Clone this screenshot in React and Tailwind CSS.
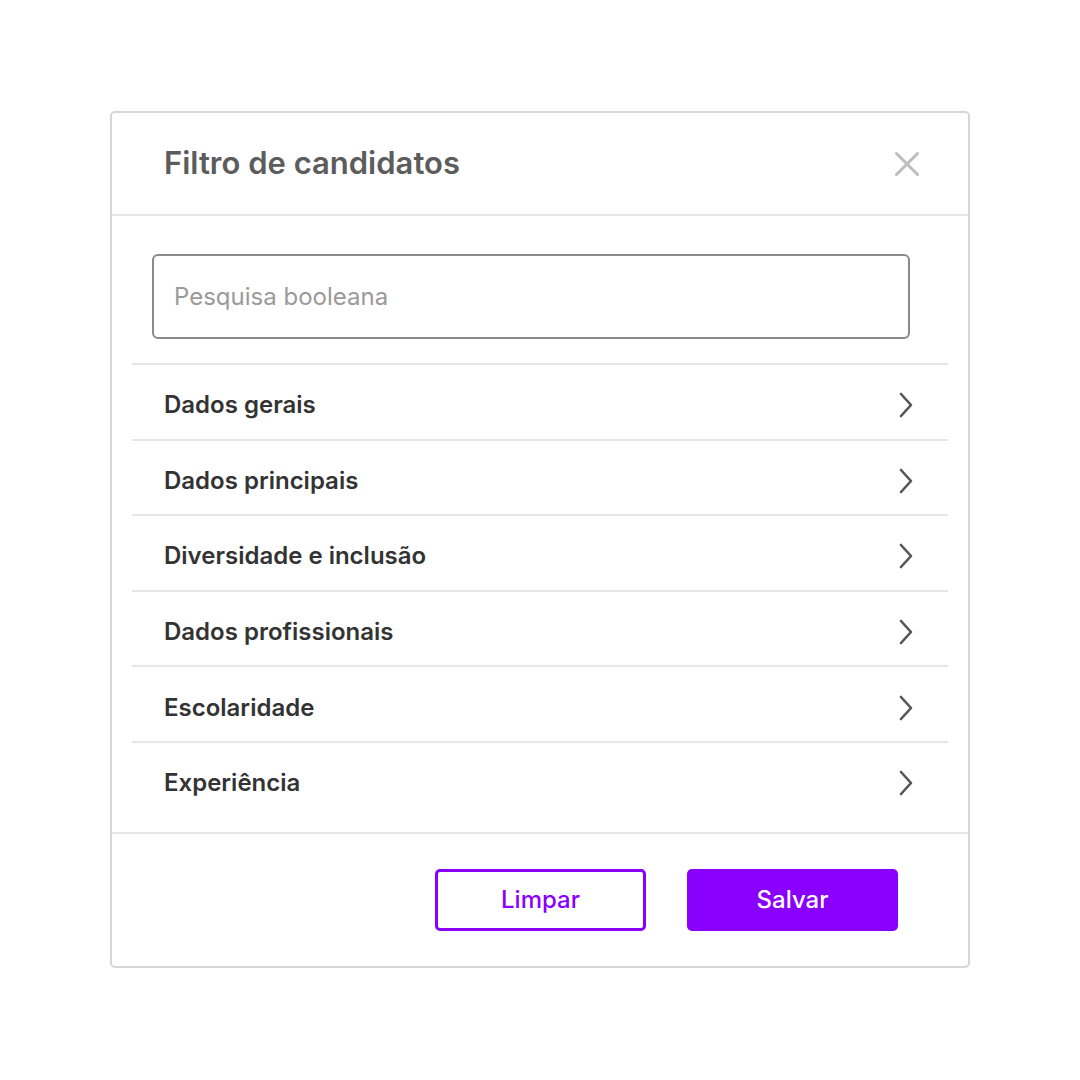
const sections = [
  "Dados gerais",
  "Dados principais",
  "Diversidade e inclusão",
  "Dados profissionais",
  "Escolaridade",
  "Experiência",
];

function Chevron() {
  return (
    <svg width="16" height="26" viewBox="0 0 16 26" fill="none" className="shrink-0">
      <path d="M3 2l10 11-10 11" stroke="#555555" strokeWidth="2.6" strokeLinecap="round" strokeLinejoin="round" />
    </svg>
  );
}

function CloseIcon() {
  return (
    <svg width="26" height="26" viewBox="0 0 26 26" fill="none">
      <path d="M2.5 2.5l21 21M23.5 2.5l-21 21" stroke="#bdbdbd" strokeWidth="3" strokeLinecap="round" />
    </svg>
  );
}

export default function App() {
  return (
    <div className="min-h-[1080px] bg-white pt-[111px]" style={{ fontFamily: "Inter, 'Noto Sans', sans-serif" }}>
      <div className="mx-auto w-[860px] rounded-[5px] border-2 border-[#d6d6d6] bg-white">
        {/* Header */}
        <div className="flex h-[103px] items-center justify-between border-b-2 border-[#e6e6e6] pl-[52px] pr-[48px]">
          <h2 className="text-[31px] font-semibold text-[#5c5c5c]">Filtro de candidatos</h2>
          <button className="flex items-center justify-center">
            <CloseIcon />
          </button>
        </div>

        {/* Body */}
        <div className="px-[20px] pb-[15px]">
          <div className="pt-[38px] pb-[24px] pl-[20px]">
            <input
              type="text"
              placeholder="Pesquisa booleana"
              className="h-[85px] w-[758px] rounded-[6px] border-2 border-[#8a8a8a] px-[20px] text-[24px] text-[#333] outline-none placeholder:text-[#9a9a9a]"
            />
          </div>
          <div>
            {sections.map((s) => (
              <div
                key={s}
                className="flex h-[75.6px] items-center justify-between border-t-2 border-[#e6e6e6] pt-[7px] pl-[32px] pr-[34px]"
              >
                <span className="text-[24px] font-semibold text-[#333333]">{s}</span>
                <Chevron />
              </div>
            ))}
          </div>
        </div>

        {/* Footer */}
        <div className="flex items-center justify-end gap-[41px] border-t-2 border-[#e6e6e6] pt-[35px] pb-[35px] pr-[70px]">
          <button className="h-[62px] w-[211px] rounded-[5px] border-[3px] border-[#8a00ff] text-[24px] font-medium text-[#8a00ff]">
            Limpar
          </button>
          <button className="h-[62px] w-[211px] rounded-[5px] bg-[#8a00ff] text-[24px] font-medium text-white">
            Salvar
          </button>
        </div>
      </div>
    </div>
  );
}
